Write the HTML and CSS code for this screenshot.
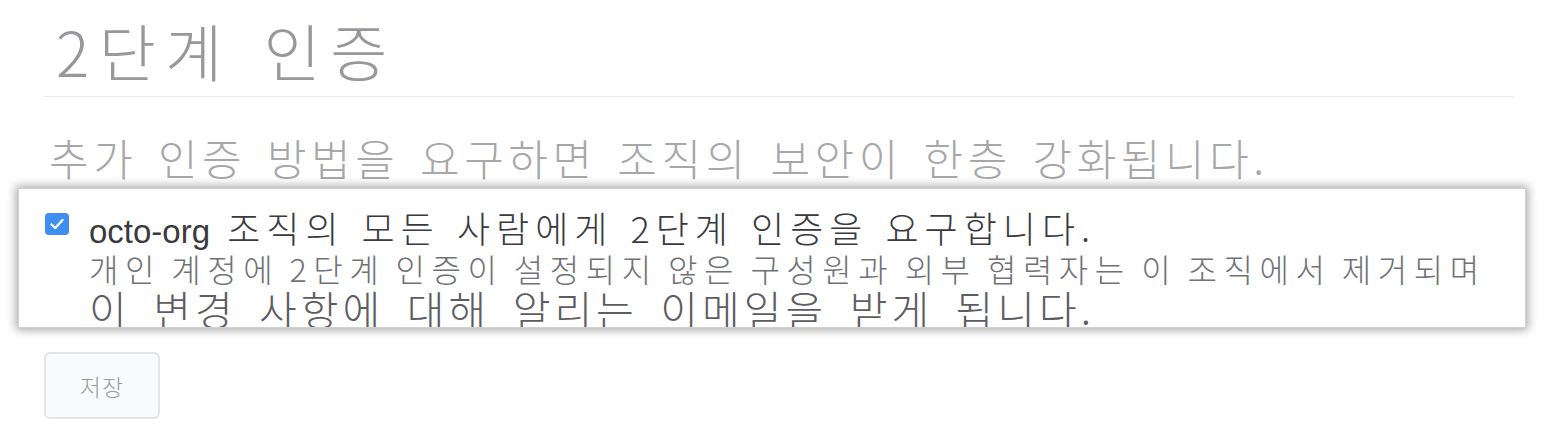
FILE: index.html
```html
<!DOCTYPE html>
<html lang="ko">
<head>
<meta charset="utf-8">
<link rel="stylesheet" href="styles.css">
</head>
<body>
<div class="page">
  <h1 class="title">2단계 인증</h1>
  <div class="rule"></div>
  <p class="lead">추가 인증 방법을 요구하면 조직의 보안이 한층 강화됩니다.</p>
  <div class="callout">
    <span class="check">
      <svg viewBox="0 0 24 22" width="24" height="22"><rect x="0" y="0" width="24" height="22" rx="4" fill="#3d8ef0"/><path d="M6.5 11.5 L10.2 15 L17.5 7" fill="none" stroke="#fff" stroke-width="2.4" stroke-linecap="round" stroke-linejoin="round"/></svg>
    </span>
    <div class="callout-text">
      <div class="l1"><span class="org">octo-org</span> 조직의 모든 사람에게 2단계 인증을 요구합니다.</div>
      <div class="l2">개인 계정에 2단계 인증이 설정되지 않은 구성원과 외부 협력자는 이 조직에서 제거되며</div>
      <div class="l3">이 변경 사항에 대해 알리는 이메일을 받게 됩니다.</div>
    </div>
  </div>
  <button class="save">저장</button>
</div>
</body>
</html>
```
FILE: styles.css
```css
html, body {
  margin: 0;
  padding: 0;
  background: #fff;
}
body {
  font-family: "Noto Sans CJK KR", "Liberation Sans", sans-serif;
}
.page {
  display: flex;
  flex-direction: column;
  padding: 0 34px 0 44px;
}
.title {
  margin: 0;
  height: 96px;
  padding-left: 12px;
  font-size: 62px;
  line-height: 100px;
  font-weight: 300;
  color: #98989c;
  letter-spacing: 9.5px;
  word-spacing: 5px;
  white-space: nowrap;
  overflow: hidden;
}
.rule {
  height: 1px;
  background: #eaeaea;
}
.lead {
  margin: 0;
  height: 91px;
  padding-left: 5px;
  font-size: 43px;
  line-height: 120px;
  font-weight: 300;
  color: #a7a7aa;
  letter-spacing: 4.6px;
  word-spacing: 4px;
  white-space: nowrap;
  overflow: hidden;
}
.callout {
  display: flex;
  align-items: flex-start;
  margin-left: -26px;
  margin-right: -12px;
  height: 138px;
  border: 1px solid #d0d0d0;
  box-shadow: 0 0 9px 2px rgba(0,0,0,0.35);
  background: #fff;
  overflow: hidden;
  padding-left: 26px;
}
.check {
  display: block;
  width: 24px;
  height: 22px;
  margin-top: 24px;
}
.check svg { display: block; }
.callout-text {
  margin-left: 20px;
  display: flex;
  flex-direction: column;
  padding-top: 20px;
  white-space: nowrap;
}
.l1 {
  font-size: 36px;
  line-height: 36px;
  font-weight: 300;
  color: #3a3a3e;
  letter-spacing: 6px;
  word-spacing: 1px;
}
.org {
  font-family: "Liberation Sans", sans-serif;
  font-weight: 400;
  font-size: 33px;
  letter-spacing: 0;
}
.l2 {
  font-size: 32px;
  line-height: 36px;
  font-weight: 300;
  color: #717177;
  letter-spacing: 6.5px;
  word-spacing: -5px;
}
.l3 {
  font-size: 41px;
  line-height: 44px;
  font-weight: 300;
  color: #5c5c62;
  letter-spacing: 4px;
  word-spacing: 7px;
}
.save {
  align-self: flex-start;
  margin-top: 24px;
  width: 116px;
  height: 67px;
  border: 2px solid #e3e4e7;
  border-radius: 6px;
  background: #f9fafc;
  color: #9c9ca0;
  font-family: "Noto Sans CJK KR", sans-serif;
  font-size: 23px;
  font-weight: 300;
  letter-spacing: 1px;
}
```
